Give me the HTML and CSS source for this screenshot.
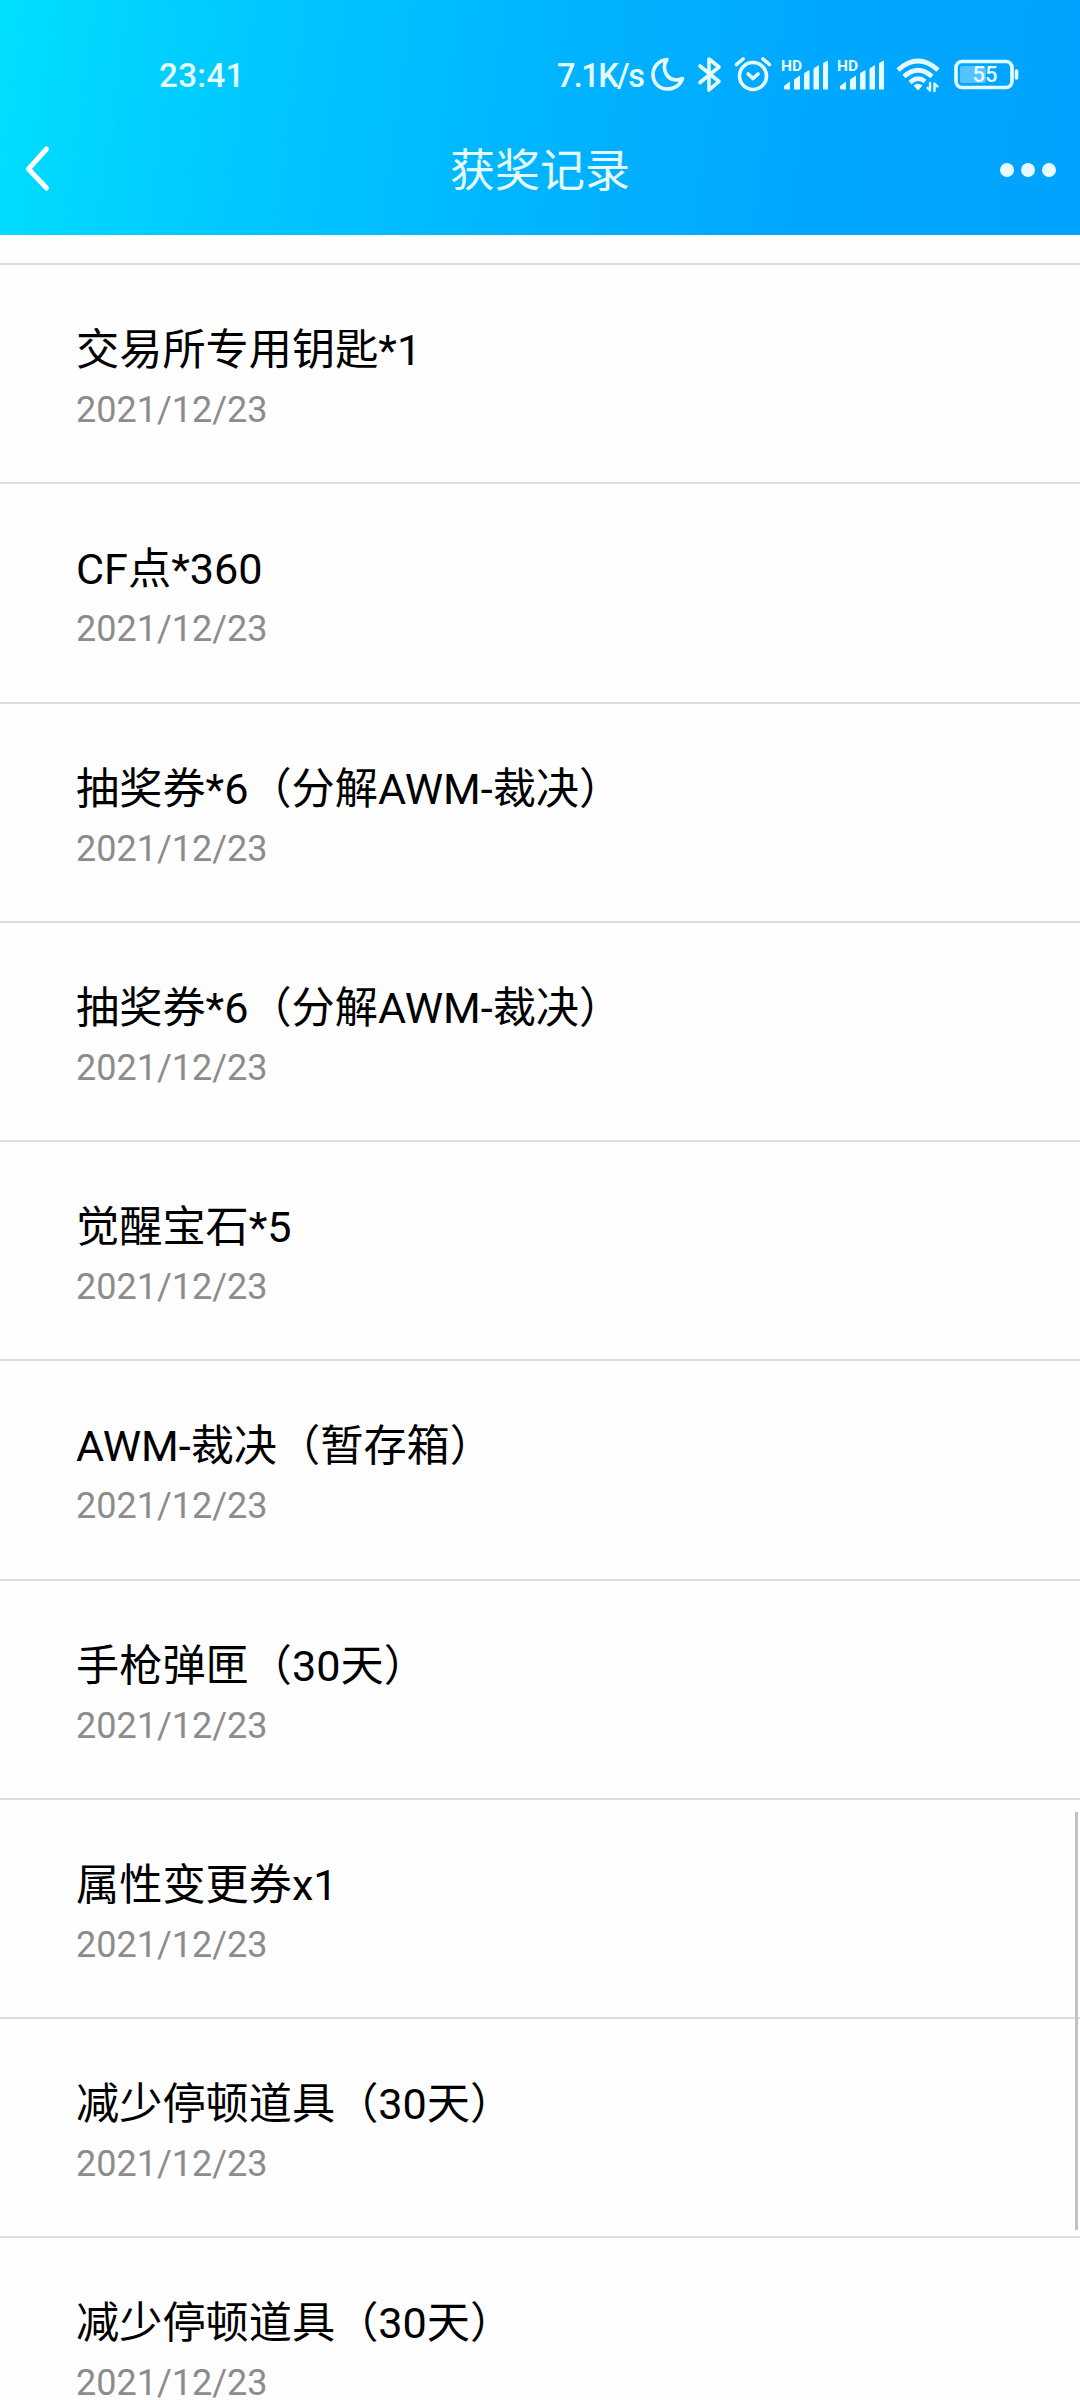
FILE: index.html
```
<!DOCTYPE html>
<html lang="zh-CN">
<head>
    <meta charset="UTF-8">
    <meta name="viewport" content="width=device-width, initial-scale=1.0">
    <title>获奖记录</title>
    <link rel="stylesheet" href="styles.css">
</head>
<body>
    <header class="header">
        <div class="status-bar">
            <span class="clock">23:41</span>
            <div class="status-icons">
                <span class="speed">7.1K/s</span>
                <svg class="icon-moon" width="34" height="44" viewBox="0 0 34 44">
                    <path d="M16 7.5C7.500 8.500 2 15 2 22.500C2 31 8.500 37 16.500 37C23.500 37 29.500 33 31.500 26.500C25 29.500 18.500 27.500 15.500 22.500C12.500 17.500 13 12 16 7.500Z"/>
                </svg>
                <svg class="icon-bluetooth" width="24" height="44" viewBox="0 0 24 44">
                    <path d="M2 14L21 29.500L11 38V7L21 15L2 30.500"/>
                </svg>
                <svg class="icon-alarm" width="38" height="44" viewBox="0 0 38 44">
                    <circle cx="19" cy="24" r="13.500"/>
                    <path d="M2.500 12.500L9 7M35.500 12.500L29 7M14.200 22L19 26.500L24 22"/>
                </svg>
                <svg class="icon-signal" width="46" height="44" viewBox="0 0 46 44">
                    <text x="-1" y="19">HD</text>
                    <path d="M2 34L8 29.500V37.500H3.500Q2 37.500 2 36Z"/>
                    <path d="M12 27.500L18 23.500V37.500H12Z"/>
                    <path d="M22 22Q22 21 23 20.500L27.500 18V37.500H22Z"/>
                    <path d="M31.500 17.500Q31.500 16 33 15.500L37 13V37.500H31.500Z"/>
                    <path d="M41 12Q41 11 42 10.500L46 8.500V37.500H41Z"/>
                </svg>
                <svg class="icon-signal" width="46" height="44" viewBox="0 0 46 44">
                    <text x="-1" y="19">HD</text>
                    <path d="M2 34L8 29.500V37.500H3.500Q2 37.500 2 36Z"/>
                    <path d="M12 27.500L18 23.500V37.500H12Z"/>
                    <path d="M22 22Q22 21 23 20.500L27.500 18V37.500H22Z"/>
                    <path d="M31.500 17.500Q31.500 16 33 15.500L37 13V37.500H31.500Z"/>
                    <path d="M41 12Q41 11 42 10.500L46 8.500V37.500H41Z"/>
                </svg>
                <svg class="icon-wifi" width="44" height="44" viewBox="0 0 44 44">
                    <path class="arc" d="M2 18Q22 0 42 18M8 24.500Q22 12 36 24.500M14 30.500Q22 23.500 29 29.500"/>
                    <path class="dot" d="M17.500 33.500Q22 30 26.500 33.500L22 38.500Z"/>
                    <path class="arrows" d="M34 31V38.500L31.500 36M38.500 39V31.500L41.500 34.500"/>
                </svg>
                <svg class="icon-battery" width="66" height="44" viewBox="0 0 66 44">
                    <rect class="level" x="6" y="14" width="26" height="17" rx="2"/>
                    <rect class="frame" x="2" y="9.500" width="56" height="26" rx="6"/>
                    <path class="nub" d="M62.500 19V26"/>
                    <text x="31" y="30">55</text>
                </svg>
            </div>
        </div>
        <nav class="nav-bar">
            <svg class="icon-back" width="28" height="50" viewBox="0 0 28 50">
                <path d="M22.500 4L4.500 24L22.500 43"/>
            </svg>
            <h1>获奖记录</h1>
            <div class="more"><i></i><i></i><i></i></div>
        </nav>
    </header>

    <main class="records">
        <div class="record">
            <h2>交易所专用钥匙*1</h2>
            <p>2021/12/23</p>
        </div>
        <div class="record">
            <h2>CF点*360</h2>
            <p>2021/12/23</p>
        </div>
        <div class="record">
            <h2>抽奖券*6（分解AWM-裁决）</h2>
            <p>2021/12/23</p>
        </div>
        <div class="record">
            <h2>抽奖券*6（分解AWM-裁决）</h2>
            <p>2021/12/23</p>
        </div>
        <div class="record">
            <h2>觉醒宝石*5</h2>
            <p>2021/12/23</p>
        </div>
        <div class="record">
            <h2>AWM-裁决（暂存箱）</h2>
            <p>2021/12/23</p>
        </div>
        <div class="record">
            <h2>手枪弹匣（30天）</h2>
            <p>2021/12/23</p>
        </div>
        <div class="record">
            <h2>属性变更券x1</h2>
            <p>2021/12/23</p>
        </div>
        <div class="record">
            <h2>减少停顿道具（30天）</h2>
            <p>2021/12/23</p>
        </div>
        <div class="record">
            <h2>减少停顿道具（30天）</h2>
            <p>2021/12/23</p>
        </div>
    </main>
    <div class="scroll-thumb"></div>
</body>
</html>
```
FILE: styles.css
```
* {
    box-sizing: border-box;
    margin: 0;
    padding: 0;
}
body {
    position: relative;
    width: 1080px;
    height: 2400px;
    overflow: hidden;
    background-color: #fefefe;
    color: #000;
    font-family: Roboto, "Noto Sans CJK SC", sans-serif;
}
.header {
    height: 235px;
    background: linear-gradient(98deg, #00dfff 0%, #00d0ff 14%, #00c0ff 33%, #00b3ff 52%, #00a7ff 75%, #00a3ff 100%);
    color: #e6fbff;
}
.status-bar {
    display: flex;
    justify-content: space-between;
    align-items: center;
    height: 126px;
    padding: 22px 60px 0 159px;
}
.clock {
    padding-top: 3px;
    font-size: 33px;
    font-weight: 500;
    line-height: 44px;
    letter-spacing: 0.4px;
}
.status-icons {
    display: flex;
    align-items: center;
}
.status-icons svg {
    display: block;
    flex: none;
    overflow: visible;
    fill: none;
    stroke: #e6fbff;
    stroke-width: 3.6;
    stroke-linecap: round;
    stroke-linejoin: round;
}
.speed {
    width: 94px;
    padding-top: 3px;
    font-size: 32.5px;
    font-weight: 500;
    line-height: 44px;
    letter-spacing: -1.6px;
    white-space: nowrap;
}
.icon-bluetooth {
    margin-left: 13px;
}
.icon-alarm {
    margin-left: 12px;
}
.status-icons .icon-signal {
    margin-left: 10px;
    fill: #e6fbff;
    stroke: none;
}
.icon-signal text {
    font-size: 15.5px;
    font-weight: 700;
}
.icon-wifi {
    margin-left: 12px;
}
.icon-wifi .arc {
    stroke-width: 4.6;
    stroke-linecap: butt;
}
.icon-wifi .dot {
    fill: #e6fbff;
    stroke: none;
}
.icon-wifi .arrows {
    stroke-width: 2.4;
}
.icon-battery {
    margin-left: 14px;
}
.icon-battery .level {
    fill: #55c3ff;
    stroke: none;
}
.icon-battery text {
    fill: #e6fbff;
    stroke: none;
    font-size: 22px;
    font-weight: 500;
    text-anchor: middle;
}
.nav-bar {
    display: flex;
    justify-content: space-between;
    align-items: center;
    height: 88px;
    padding: 0 24px 0 24px;
}
.icon-back {
    width: 56px;
    padding-right: 28px;
    fill: none;
    stroke: #fff;
    stroke-width: 5;
    stroke-linecap: round;
    stroke-linejoin: round;
}
.nav-bar h1 {
    padding-top: 4px;
    font-size: 45px;
    font-weight: 400;
    line-height: 60px;
}
.more {
    display: flex;
    gap: 7px;
}
.more i {
    width: 14px;
    height: 14px;
    border-radius: 50%;
    background-color: #e6fbff;
}
.records {
    margin-top: 28px;
}
.record {
    height: 219.25px;
    padding: 56px 76px 0;
    border-top: 2px solid #dcdcdc;
}
.record h2 {
    font-size: 43.2px;
    font-weight: 400;
    line-height: 60px;
    white-space: nowrap;
}
.record p {
    color: #8c8c8c;
    font-size: 36px;
    line-height: 58px;
}
.scroll-thumb {
    position: absolute;
    top: 1812px;
    left: 1075px;
    width: 3px;
    height: 418px;
    background-color: #c1c1c1;
}
```
